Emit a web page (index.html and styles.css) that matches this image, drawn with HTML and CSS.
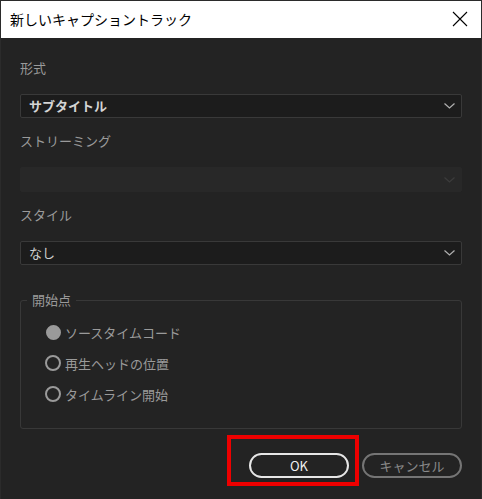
FILE: index.html
```html
<!DOCTYPE html>
<html lang="ja">
<head>
<meta charset="utf-8">
<link rel="stylesheet" href="styles.css">
</head>
<body>
<div class="window">
  <div class="titlebar">
    <span class="title">新しいキャプショントラック</span>
    <svg class="close" width="16" height="16" viewBox="0 0 16 16"><path d="M1 1L15 15M15 1L1 15" stroke="#000" stroke-width="1.1" fill="none"/></svg>
  </div>
  <div class="content">
    <div class="field">
      <div class="label">形式</div>
      <div class="select"><span class="val bold">サブタイトル</span><svg class="chev" width="11" height="6" viewBox="0 0 11 6"><path d="M0.5 0.5L5.5 5L10.5 0.5" stroke="#b0b0b0" stroke-width="1.2" fill="none"/></svg></div>
    </div>
    <div class="field">
      <div class="label">ストリーミング</div>
      <div class="select disabled"><span class="val"></span><svg class="chev" width="11" height="6" viewBox="0 0 11 6"><path d="M0.5 0.5L5.5 5L10.5 0.5" stroke="#3c3c3c" stroke-width="1.2" fill="none"/></svg></div>
    </div>
    <div class="field">
      <div class="label">スタイル</div>
      <div class="select"><span class="val">なし</span><svg class="chev" width="11" height="6" viewBox="0 0 11 6"><path d="M0.5 0.5L5.5 5L10.5 0.5" stroke="#b0b0b0" stroke-width="1.2" fill="none"/></svg></div>
    </div>
    <fieldset class="group">
      <legend>開始点</legend>
      <div class="radio"><span class="dot filled"></span><span>ソースタイムコード</span></div>
      <div class="radio"><span class="dot"></span><span>再生ヘッドの位置</span></div>
      <div class="radio"><span class="dot"></span><span>タイムライン開始</span></div>
    </fieldset>
    <div class="buttons">
      <div class="okwrap">
        <button class="btn ok">OK</button>
        <div class="highlight"></div>
      </div>
      <button class="btn cancel">キャンセル</button>
    </div>
  </div>
</div>
</body>
</html>
```
FILE: styles.css
```css
* { box-sizing: border-box; }
html, body { margin: 0; padding: 0; }
body {
  width: 482px;
  height: 499px;
  background: #232323;
  font-family: "Noto Sans CJK JP", "Noto Sans", sans-serif;
  overflow: hidden;
}
.window {
  width: 482px;
  height: 499px;
  border-top: 1px solid #2b2b2b;
  border-left: 1px solid #2b2b2b;
  border-right: 1px solid #2b2b2b;
  display: flex;
  flex-direction: column;
}
.titlebar {
  height: 37px;
  background: #ffffff;
  display: flex;
  align-items: center;
  justify-content: space-between;
  padding: 0 13px 0 9px;
}
.title {
  font-size: 14px;
  color: #000;
  line-height: 18px;
  margin-top: -1px;
}
.close { display: block; margin-top: -1px; }
.content {
  flex: 1;
  background: #232323;
  padding: 21px 19px 0 19px;
  display: flex;
  flex-direction: column;
}
.field { display: flex; flex-direction: column; margin-bottom: 14px; }
.label {
  font-size: 13px;
  line-height: 18px;
  color: #9a9a9a;
  margin-bottom: 17px;
}
.select {
  height: 24px;
  background: #1c1c1c;
  border: 1px solid #393939;
  border-radius: 2px;
  display: flex;
  align-items: center;
  justify-content: space-between;
  padding: 0 6px 0 8px;
}
.select.disabled {
  background: #282828;
  border-color: #282828;
  height: 25px;
}
.val { font-size: 13px; color: #cfcfcf; line-height: 18px; }
.val.bold { font-weight: 700; color: #d4d4d4; }
.chev { display: block; }
.group {
  margin: 13px 0 0 0;
  padding: 14px 0 12px 6px;
  border: 1px solid #383838;
  border-radius: 3px;
  height: 137px;
}
.group legend {
  font-size: 13px;
  color: #9a9a9a;
  padding: 0 5px;
  line-height: 16px;
}
.radio {
  display: flex;
  align-items: center;
  gap: 4px;
  font-size: 13px;
  color: #9a9a9a;
  height: 20px;
  margin: 0 0 11px 18px;
}
.dot {
  width: 16px;
  height: 16px;
  border-radius: 50%;
  border: 2px solid #9a9a9a;
}
.dot.filled { background: #9a9a9a; border-color: #9a9a9a; width: 15px; height: 15px; margin-left: 1px; }
.buttons {
  display: flex;
  justify-content: flex-end;
  gap: 13px;
  margin-top: 24px;
}
.okwrap { position: relative; }
.btn {
  width: 100px;
  height: 25px;
  border-radius: 13px;
  background: transparent;
  font-family: "Noto Sans CJK JP", "Noto Sans", sans-serif;
  font-size: 13px;
  line-height: 18px;
  padding: 0;
  display: block;
}
.ok { border: 2px solid #e6e6e6; color: #f0f0f0; }
.cancel { border: 2px solid #757575; color: #8a8a8a; }
.highlight {
  position: absolute;
  left: -22px;
  top: -18px;
  width: 132px;
  height: 51px;
  border: 4px solid #ee0000;
}
```
